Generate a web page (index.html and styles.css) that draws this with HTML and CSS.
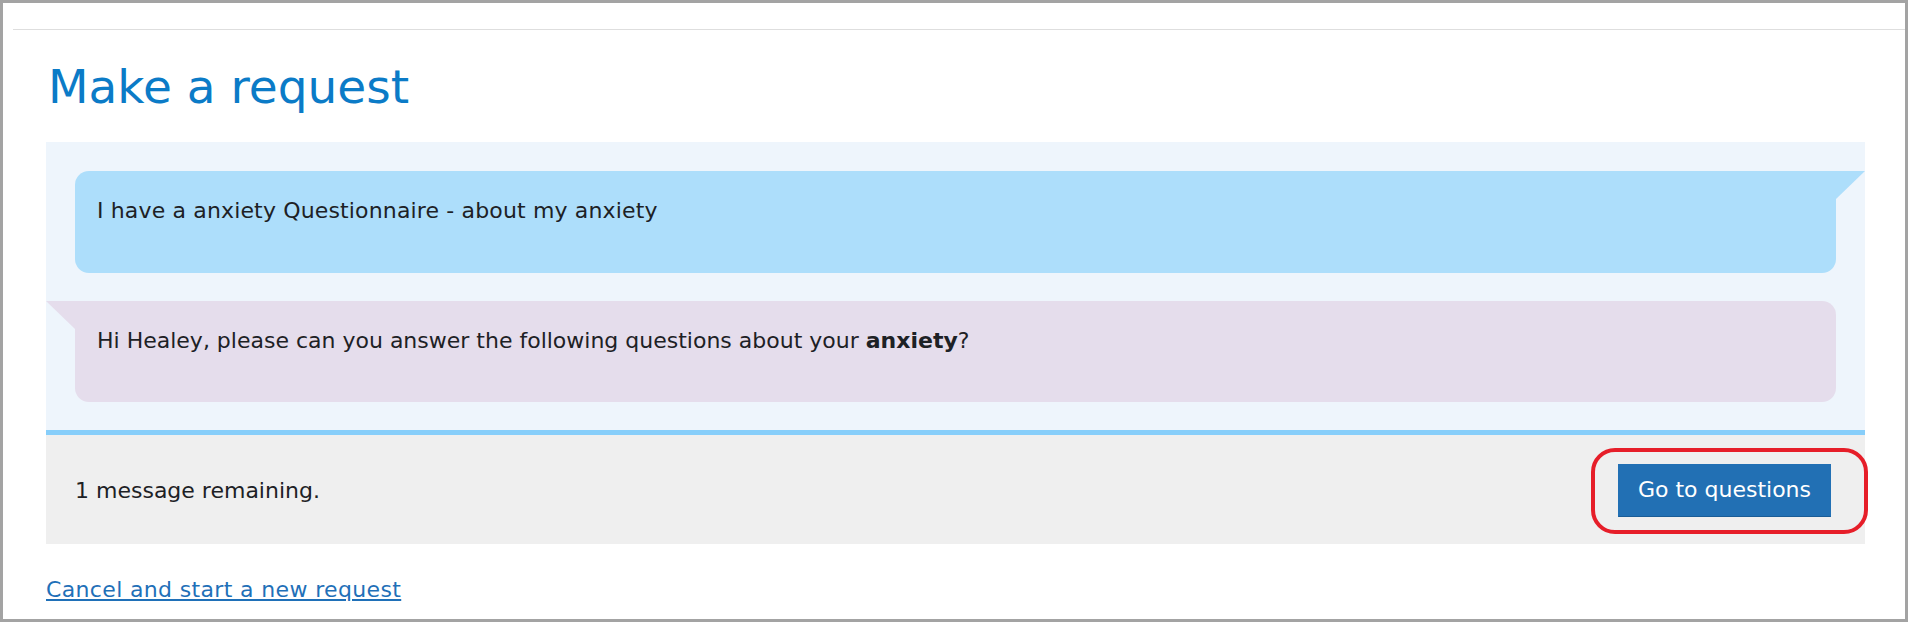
FILE: index.html
```html
<!DOCTYPE html>
<html lang="en">
<head>
    <meta charset="UTF-8">
    <meta name="viewport" content="width=device-width, initial-scale=1.0">
    <title>Make a request</title>
    <link rel="stylesheet" href="styles.css">
</head>
<body>
    <div class="frame">
        <div class="topbar"></div>
        <div class="content">
            <h1>Make a request</h1>

            <div class="chat">
                <div class="bubble bubble-user">
                    <p>I have a anxiety Questionnaire - about my anxiety</p>
                </div>
                <div class="bubble bubble-reply">
                    <p>Hi Healey, please can you answer the following questions about your <strong>anxiety</strong>?</p>
                </div>
            </div>

            <div class="chat-footer">
                <span>1 message remaining.</span>
                <button class="btn">Go to questions</button>
                <!-- annotation ring drawn over the button -->
                <div class="highlight"></div>
            </div>

            <a class="cancel-link" href="#">Cancel and start a new request</a>
        </div>
    </div>
</body>
</html>
```

FILE: styles.css
```css
html, body {
    margin: 0;
    padding: 0;
}
body {
    font-family: "DejaVu Sans", "Liberation Sans", sans-serif;
    color: #1d2125;
    background: #fff;
}
.frame {
    box-sizing: border-box;
    height: 622px;
    border: 3px solid #a3a3a3;
    overflow: hidden;
}
.topbar {
    height: 26px;
    margin-left: 10px;
    border-bottom: 1px solid #dedede;
}
.content {
    padding: 0 40px 0 43px;
}
h1 {
    margin: 29px 0 27px 2px;
    font-size: 47px;
    line-height: 56px;
    font-weight: normal;
    color: #0b7bc7;
}

/* chat panel */
.chat {
    background-color: #eef5fc;
    padding: 29px 29px 28px;
    border-bottom: 5px solid #87cefa;
    display: flex;
    flex-direction: column;
    gap: 28px;
}
.bubble {
    position: relative;
    padding: 25px 22px 47px;
    border-radius: 14px;
}
.bubble p {
    margin: 0;
    font-size: 22px;
    line-height: 30px;
}
.bubble strong {
    font-weight: bold;
}
.bubble-user {
    background-color: #addefb;
    border-top-right-radius: 0;
}
.bubble-user p {
    letter-spacing: 0.15px;
}
.bubble-user::after {
    content: "";
    position: absolute;
    top: 0;
    right: -29px;
    width: 29px;
    height: 28px;
    background-color: #addefb;
    clip-path: polygon(0 0, 100% 0, 0 100%);
}
.bubble-reply {
    background-color: #e5ddec;
    border-top-left-radius: 0;
    padding-bottom: 46px;
}
.bubble-reply::before {
    content: "";
    position: absolute;
    top: 0;
    left: -29px;
    width: 29px;
    height: 28px;
    background-color: #e5ddec;
    clip-path: polygon(0 0, 100% 0, 100% 100%);
}

/* footer bar */
.chat-footer {
    position: relative;
    height: 109px;
    background-color: #efefef;
    padding: 2px 34px 0 29px;
    box-sizing: border-box;
    display: flex;
    align-items: center;
    justify-content: space-between;
    font-size: 22px;
    line-height: 30px;
}
.btn {
    font-family: inherit;
    font-size: 22px;
    line-height: 30px;
    color: #fff;
    background-color: #2270b4;
    border: 1px solid #2270b4;
    border-bottom-color: #1a5c96;
    padding: 10px 19px 11px;
    margin-top: -1px;
    cursor: pointer;
}
.highlight {
    position: absolute;
    top: 13px;
    right: -3px;
    width: 277px;
    height: 86px;
    box-sizing: border-box;
    border: 4px solid #e61e29;
    border-radius: 24px;
    pointer-events: none;
}

.cancel-link {
    display: inline-block;
    margin-top: 31px;
    font-size: 22px;
    line-height: 30px;
    letter-spacing: 0.35px;
    color: #1f70b8;
    text-decoration: underline;
}
```
